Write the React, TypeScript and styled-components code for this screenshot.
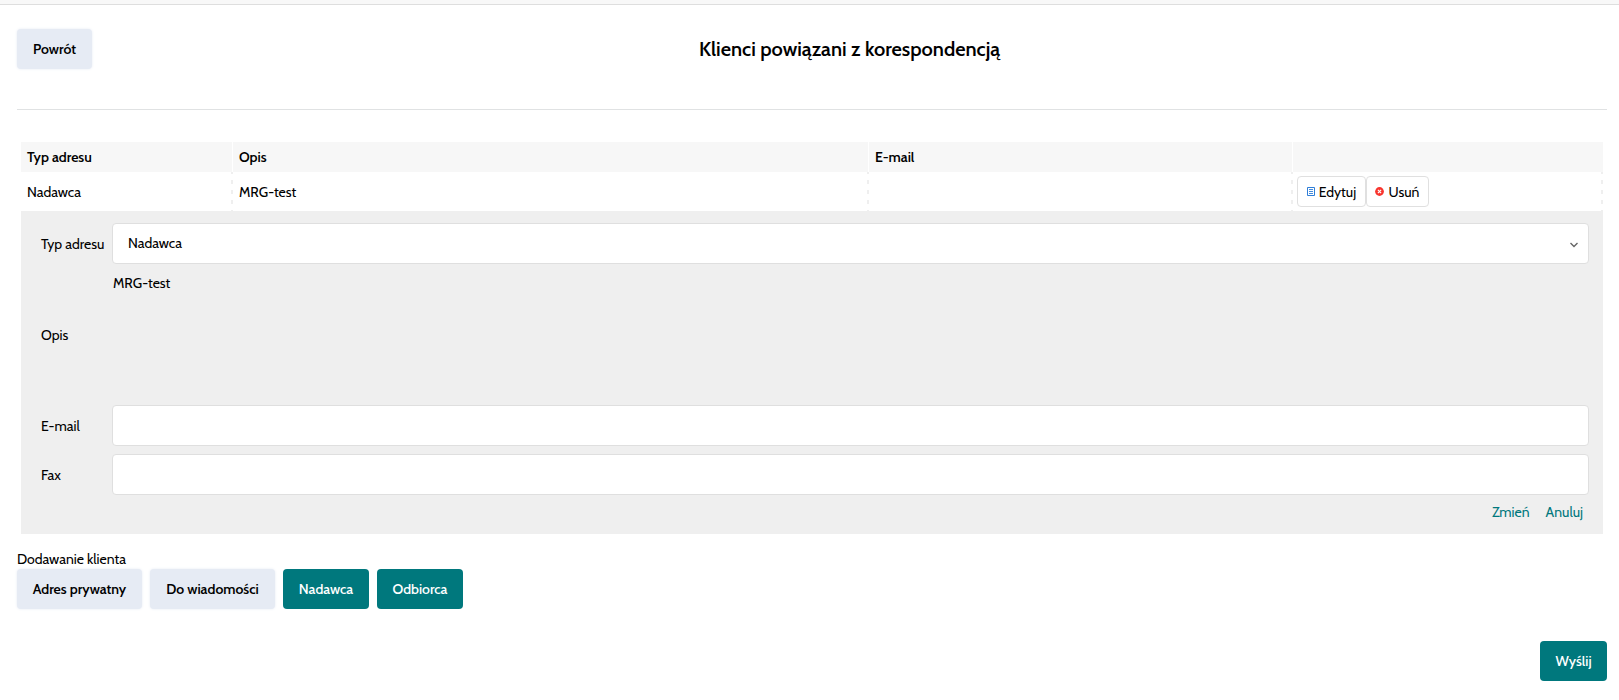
import React from "react";
import styled, { createGlobalStyle, css } from "styled-components";

const GlobalStyle = createGlobalStyle`
  *, *::before, *::after { box-sizing: border-box; }
  body {
    margin: 0;
    background: #fff;
    color: #000;
    font-family: Cabin, Lato, "Noto Sans", sans-serif;
    font-size: 14px;
    line-height: 20px;
  }
  button, input, select { font: inherit; color: inherit; }
`;

const TopStrip = styled.div`
  height: 5px;
  background: #f8f8f8;
  border-bottom: 1px solid #dedede;
`;

const Page = styled.main`
  display: flex;
  flex-direction: column;
  padding: 24px 12px 19px 17px;
`;

const Header = styled.header`
  display: flex;
  align-items: center;
  padding-bottom: 40px;
  border-bottom: 1px solid #e0e2e3;
`;

const Title = styled.h1`
  flex: 1;
  margin: 0;
  text-align: center;
  font-size: 20px;
  line-height: 24px;
  font-weight: 600;
`;

const Button = styled.button<{ $primary?: boolean; $width: number }>`
  height: 40px;
  min-width: ${(p) => p.$width}px;
  padding: 0 12px;
  border: 0;
  border-radius: 4px;
  white-space: nowrap;
  cursor: pointer;
  ${(p) =>
    p.$primary
      ? css`
          background: #00787d;
          color: #fff;
          font-weight: 500;
        `
      : css`
          background: #e6ebf4;
          font-weight: 600;
          box-shadow: 0 0 3px #e6ebf4;
        `}
`;

const ClientsTable = styled.table`
  margin: 32px 4px 0;
  table-layout: fixed;
  border-collapse: separate;
  border-spacing: 0;
`;

const Column = styled.col<{ $share: number }>`
  width: ${(p) => p.$share}%;
`;

const HeadCell = styled.th`
  height: 30px;
  padding: 0 6px;
  text-align: left;
  font-weight: 600;
  background: #f7f7f7;
  &:not(:last-child) { border-right: 1px solid #fff; }
`;

const Cell = styled.td<{ $tight?: boolean }>`
  height: 39px;
  padding: 0 ${(p) => (p.$tight ? 4 : 6)}px;
  background: linear-gradient(#efefef 4px, transparent 4px) right 8px / 2px 10px repeat-y;
`;

const EditorCell = styled.td`
  padding: 12px 14px 13px 20px;
  background: #efefef;
`;

const RowActions = styled.div`
  display: flex;
`;

const RowButton = styled.button<{ $width: number }>`
  display: flex;
  align-items: center;
  justify-content: center;
  gap: 4px;
  height: 31px;
  min-width: ${(p) => p.$width}px;
  padding: 0 8px;
  border: 1px solid #e0e0e0;
  border-radius: 4px;
  background: #fff;
  cursor: pointer;
`;

const EditorGrid = styled.form`
  display: grid;
  grid-template-columns: 63px 1fr;
  gap: 8px;
  align-items: center;
`;

const FieldLabel = styled.label`
  white-space: nowrap;
`;

const fieldBox = css`
  display: block;
  width: 100%;
  height: 41px;
  padding: 0 15px 2px;
  border: 1px solid #dfdfdf;
  border-radius: 4px;
  background: #fff;
  outline: none;
`;

const TextInput = styled.input`
  ${fieldBox}
`;

const SelectWrap = styled.div`
  position: relative;
`;

const Select = styled.select`
  ${fieldBox}
  appearance: none;
`;

const Chevron = styled.svg`
  position: absolute;
  top: 18px;
  right: 11px;
  pointer-events: none;
`;

const Description = styled.output`
  height: 125px;
  padding: 1px;
`;

const FormLinks = styled.div`
  grid-column: 1 / -1;
  display: flex;
  justify-content: flex-end;
  gap: 16px;
  padding-right: 6px;
  line-height: 18px;
`;

const FormLink = styled.a`
  color: #00787d;
  text-decoration: none;
`;

const AddTitle = styled.div`
  margin-top: 15px;
`;

const AddButtons = styled.div`
  display: flex;
  gap: 8px;
`;

const Footer = styled.footer`
  display: flex;
  justify-content: flex-end;
  margin-top: 32px;
`;

const EditIcon = () => (
  <svg width="8" height="9" viewBox="0 0 8 9" fill="none" stroke="#2f7ed8" aria-hidden="true">
    <path d="M.5.5h7v8h-7z" />
    <path d="M2 2.5h4M2 4.5h4M2 6.5h4" strokeWidth=".9" />
  </svg>
);

const RemoveIcon = () => (
  <svg width="9" height="9" viewBox="0 0 9 9" aria-hidden="true">
    <circle cx="4.5" cy="4.5" r="4.4" fill="#f8352e" />
    <path d="M2.9 2.9l3.2 3.2M6.1 2.9L2.9 6.1" stroke="#fff" strokeWidth="1.2" />
  </svg>
);

export default function App() {
  return (
    <>
      <GlobalStyle />
      <TopStrip />
      <Page>
        <Header>
          <Button type="button" $width={75}>Powrót</Button>
          <Title>Klienci powiązani z korespondencją</Title>
        </Header>

        <ClientsTable>
          <colgroup>
            <Column $share={13.4} />
            <Column $share={40.2} />
            <Column $share={26.8} />
            <Column $share={19.6} />
          </colgroup>
          <thead>
            <tr>
              <HeadCell>Typ adresu</HeadCell>
              <HeadCell>Opis</HeadCell>
              <HeadCell>E-mail</HeadCell>
              <HeadCell />
            </tr>
          </thead>
          <tbody>
            <tr>
              <Cell>Nadawca</Cell>
              <Cell>MRG-test</Cell>
              <Cell />
              <Cell $tight>
                <RowActions>
                  <RowButton type="button" $width={69}><EditIcon />Edytuj</RowButton>
                  <RowButton type="button" $width={63}><RemoveIcon />Usuń</RowButton>
                </RowActions>
              </Cell>
            </tr>
            <tr>
              <EditorCell colSpan={4}>
                <EditorGrid>
                  <FieldLabel htmlFor="type">Typ adresu</FieldLabel>
                  <SelectWrap>
                    <Select id="type" defaultValue="Nadawca">
                      <option>Nadawca</option>
                      <option>Odbiorca</option>
                    </Select>
                    <Chevron width="8" height="8" viewBox="0 0 8 8" fill="none" stroke="#666" strokeWidth="1.4" aria-hidden="true">
                      <path d="M.5 2L4 5.5 7.5 2" />
                    </Chevron>
                  </SelectWrap>
                  <FieldLabel htmlFor="description">Opis</FieldLabel>
                  <Description id="description">MRG-test</Description>
                  <FieldLabel htmlFor="email">E-mail</FieldLabel>
                  <TextInput id="email" type="text" />
                  <FieldLabel htmlFor="fax">Fax</FieldLabel>
                  <TextInput id="fax" type="text" />
                  <FormLinks>
                    <FormLink href="#save">Zmień</FormLink>
                    <FormLink href="#cancel">Anuluj</FormLink>
                  </FormLinks>
                </EditorGrid>
              </EditorCell>
            </tr>
          </tbody>
        </ClientsTable>

        <AddTitle>Dodawanie klienta</AddTitle>
        <AddButtons>
          <Button type="button" $width={125}>Adres prywatny</Button>
          <Button type="button" $width={125}>Do wiadomości</Button>
          <Button type="button" $primary $width={86}>Nadawca</Button>
          <Button type="button" $primary $width={86}>Odbiorca</Button>
        </AddButtons>

        <Footer>
          <Button type="submit" $primary $width={67}>Wyślij</Button>
        </Footer>
      </Page>
    </>
  );
}
